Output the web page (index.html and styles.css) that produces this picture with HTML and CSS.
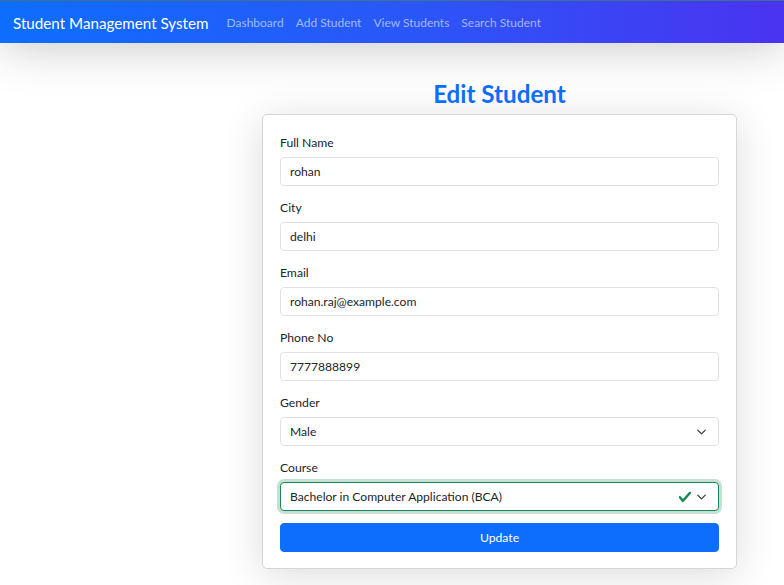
FILE: index.html
```html
<!DOCTYPE html>
<html lang="en">
<head>
<meta charset="utf-8">
<title>Edit Student</title>
<link rel="stylesheet" href="styles.css">
</head>
<body>
<nav class="navbar">
  <a class="brand" href="#">Student Management System</a>
  <ul class="nav-links">
    <li><a href="#">Dashboard</a></li>
    <li><a href="#">Add Student</a></li>
    <li><a href="#">View Students</a></li>
    <li><a href="#">Search Student</a></li>
  </ul>
</nav>
<main class="main">
  <section class="panel">
    <h2 class="title">Edit Student</h2>
    <form class="card">
      <div class="group">
        <label class="label">Full Name</label>
        <input class="control" type="text" value="rohan">
      </div>
      <div class="group">
        <label class="label">City</label>
        <input class="control" type="text" value="delhi">
      </div>
      <div class="group">
        <label class="label">Email</label>
        <input class="control" type="text" value="rohan.raj@example.com">
      </div>
      <div class="group">
        <label class="label">Phone No</label>
        <input class="control" type="text" value="7777888899">
      </div>
      <div class="group">
        <label class="label">Gender</label>
        <select class="control select"><option>Male</option></select>
      </div>
      <div class="group group-last">
        <label class="label">Course</label>
        <select class="control select valid"><option>Bachelor in Computer Application (BCA)</option></select>
      </div>
      <button class="btn" type="button">Update</button>
    </form>
  </section>
</main>
</body>
</html>
```
FILE: styles.css
```css
* { box-sizing: border-box; }
html, body { margin: 0; padding: 0; }
body {
  font-family: "Lato", "Noto Sans", sans-serif;
  color: #212529;
  background: #fff;
  min-height: 585px;
  overflow: hidden;
}
.navbar {
  position: relative;
  z-index: 2;
  display: flex;
  align-items: flex-start;
  height: 43px;
  padding: 13px 0 0 13px;
  border-top: 1px solid #3f7189;
  background: linear-gradient(90deg, #0d6efd 0%, #2c55f8 55%, #4a33f1 100%);
  box-shadow: 0 0 50px rgba(0, 0, 0, 0.26);
}
.brand {
  font-size: 15.2px;
  line-height: 18px;
  color: #fff;
  text-decoration: none;
  margin-right: 12px;
}
.nav-links {
  display: flex;
  list-style: none;
  margin: 0;
  padding: 0;
}
.nav-links a {
  display: block;
  padding: 0 6px;
  font-size: 12px;
  line-height: 18px;
  color: rgba(255, 255, 255, 0.58);
  text-decoration: none;
}
.main {
  display: flex;
  justify-content: flex-end;
  padding: 36px 47px 0 0;
}
.panel {
  width: 475px;
}
.title {
  margin: 0 0 6px;
  text-align: center;
  font-size: 24.2px;
  line-height: 29px;
  font-weight: 700;
  color: #0d6efd;
}
.card {
  background: #fff;
  border: 1px solid #d6d6d6;
  border-radius: 5px;
  padding: 19px 17px 16px;
  box-shadow: 0 6px 40px rgba(0, 0, 0, 0.14);
}
.group {
  margin-bottom: 13px;
}
.group-last {
  margin-bottom: 12px;
}
.label {
  display: block;
  font-size: 12.2px;
  line-height: 18px;
  margin-bottom: 5px;
  color: #212529;
}
.control {
  display: block;
  width: 100%;
  height: 29px;
  padding: 0 9px;
  font-family: inherit;
  font-size: 12.1px;
  color: #212529;
  background-color: #fff;
  border: 1px solid #dee2e6;
  border-radius: 4px;
  outline: none;
}
.select {
  appearance: none;
  -webkit-appearance: none;
  background-image: url("data:image/svg+xml,%3csvg xmlns='http://www.w3.org/2000/svg' viewBox='0 0 16 16'%3e%3cpath fill='none' stroke='%23343a40' stroke-linecap='round' stroke-linejoin='round' stroke-width='2' d='m2 5 6 6 6-6'/%3e%3c/svg%3e");
  background-repeat: no-repeat;
  background-position: right 10px center;
  background-size: 13px 10px;
}
.select.valid {
  border-color: #198754;
  box-shadow: 0 0 0 3px rgba(25, 135, 84, 0.25);
  background-image:
    url("data:image/svg+xml,%3csvg xmlns='http://www.w3.org/2000/svg' viewBox='0 0 16 16'%3e%3cpath fill='none' stroke='%23343a40' stroke-linecap='round' stroke-linejoin='round' stroke-width='2' d='m2 5 6 6 6-6'/%3e%3c/svg%3e"),
    url("data:image/svg+xml,%3csvg xmlns='http://www.w3.org/2000/svg' viewBox='0 0 8 8'%3e%3cpath fill='%23198754' d='M2.3 6.73.6 4.53c-.4-1.04.46-1.4 1.1-.8l1.1 1.4 3.4-3.8c.6-.63 1.6-.27 1.2.7l-4 4.6c-.43.5-.8.4-1.1.1z'/%3e%3c/svg%3e");
  background-position: right 10px center, right 26px center;
  background-size: 13px 10px, 14px 14px;
}
.btn {
  display: block;
  width: 100%;
  height: 29px;
  margin-top: 0;
  font-family: inherit;
  font-size: 12.2px;
  color: #fff;
  background: #0d6efd;
  border: 1px solid #0d6efd;
  border-radius: 4px;
  cursor: pointer;
}
```
